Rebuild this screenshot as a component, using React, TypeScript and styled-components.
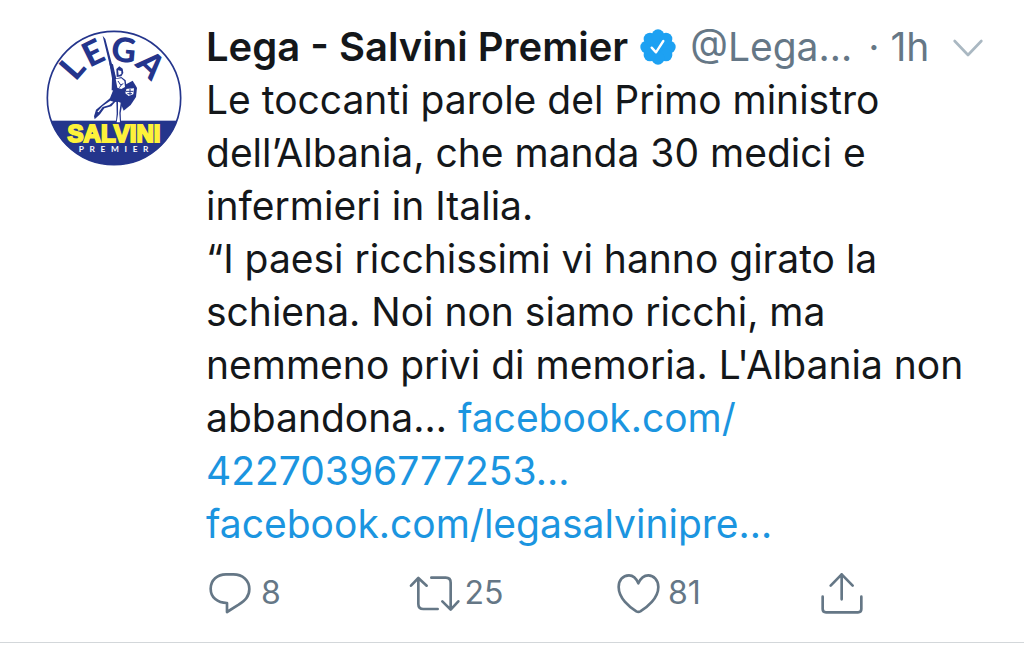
import React from "react";
import styled, { createGlobalStyle } from "styled-components";

const GlobalStyle = createGlobalStyle`
  * { box-sizing: border-box; }
  body {
    margin: 0;
    background: #ffffff;
    color: #14171a;
    font-family: Inter, "Liberation Sans", sans-serif;
  }
`;

const Tweet = styled.article`
  display: flex;
  gap: 24px;
  padding: 20px 0 28px 46px;
  border-bottom: 1px solid #d3d7da;
`;

const AvatarLink = styled.a`
  flex: none;
  width: 136px;
  height: 136px;
  margin-top: 10px;
`;

const Logo = styled.svg`
  display: block;
  width: 100%;
  height: 100%;
  overflow: visible;
`;

const Content = styled.div`
  flex: 1;
  min-width: 0;
`;

const Header = styled.header`
  display: flex;
  align-items: center;
  padding-right: 40px;
  font-size: 39px;
  line-height: 53px;
  white-space: nowrap;
`;

const Name = styled.a`
  color: inherit;
  font-size: 40px;
  font-weight: 600;
  text-decoration: none;
`;

const Badge = styled.svg`
  flex: none;
  width: 36px;
  height: 36px;
  margin: 0 14px 0 12px;
`;

const Meta = styled.span`
  color: #657786;
`;

const Time = styled.time`
  margin-left: 16px;
  color: #657786;
`;

const MenuButton = styled.button`
  display: flex;
  margin-left: auto;
  padding: 0;
  border: 0;
  background: none;
  cursor: pointer;
`;

const Chevron = styled.svg`
  width: 32px;
  height: 20px;
`;

const Text = styled.p`
  margin: 0;
  font-size: 39px;
  line-height: 53px;
  white-space: pre-line;
`;

const TextLink = styled.a`
  color: #1b95e0;
  text-decoration: none;
`;

const Actions = styled.div`
  display: grid;
  grid-template-columns: repeat(4, 1fr);
  margin-top: 22px;
  padding-right: 4px;
`;

const Action = styled.button`
  display: flex;
  align-items: center;
  gap: 5px;
  padding: 0;
  border: 0;
  background: none;
  color: #657786;
  font: inherit;
  font-size: 32px;
  line-height: 42px;
  cursor: pointer;
`;

const ActionIcon = styled.svg`
  flex: none;
  width: 50px;
  height: 42px;
  overflow: visible;
  fill: none;
  stroke: currentColor;
  stroke-width: 8;
  stroke-linecap: round;
  stroke-linejoin: round;
`;

const navy = "#24358c";
const yellow = "#fdf13a";

function LegaLogo() {
  return (
    <Logo viewBox="36 31 408 408" role="img" aria-label="Lega Salvini Premier">
      <defs>
        <clipPath id="disc">
          <circle cx="240" cy="235" r="201" />
        </clipPath>
      </defs>
      <circle cx="240" cy="235" r="201" fill="#ffffff" />
      <rect x="36" y="303" width="408" height="140" fill={navy} clipPath="url(#disc)" />
      <circle cx="240" cy="235" r="200" fill="none" stroke={navy} strokeWidth="5" />
      <g fill={navy} fontFamily="Lato, sans-serif" fontWeight="900" fontSize="102" textAnchor="middle">
        <text transform="translate(142 167) rotate(-49)">L</text>
        <text transform="translate(193 132) rotate(-26)">E</text>
        <text transform="translate(266 127) rotate(5)">G</text>
        <text transform="translate(326 161) rotate(44)">A</text>
      </g>
      {/* sword and raised arm */}
      <path d="M206 48 L214 58 L232 126 L242 162 L250 184 L240 180 L228 140 L214 82 Z" fill={navy} />
      <path d="M226 130 L237 134 L244 166 L246 214 L233 212 L234 176 Z" fill={navy} />
      {/* helmet and face */}
      <path d="M247 148 L256 140 L266 147 L268 160 L262 170 L248 172 Z" fill={navy} />
      <path d="M252 152 L262 154 L262 163 L254 167 Z" fill="#ffffff" />
      {/* shield */}
      <path d="M272 196 L296 183 L309 204 L306 232 L290 256 L269 273 L258 246 Z" fill={navy} />
      <path d="M274 208 L300 206 L298 224 L284 229 L273 220 Z" fill="#ffffff" />
      <path d="M276 215 H298 M280 222 H294 M288 208 V227" stroke={navy} strokeWidth="3" />
      {/* torso and skirt */}
      <path d="M241 178 L262 172 L275 182 L278 206 L266 248 L240 246 L226 240 L238 210 Z" fill={navy} />
      <path d="M245 178 L262 176 L271 184 L273 202 L262 208 L250 204 Z" fill="#ffffff" />
      <path d="M252 184 L260 196 L268 192 M256 204 L262 196" stroke={navy} strokeWidth="3" fill="none" />
      {/* legs */}
      <path d="M228 236 L246 244 L232 260 L211 266 L198 284 L182 299 L180 290 L186 270 L206 254 Z" fill={navy} />
      <path d="M229 243 L238 246 L226 256 L206 262 L194 278 L190 276 L206 259 Z" fill="#ffffff" />
      <path d="M247 240 L266 246 L260 280 L261 304 L246 304 L248 282 Z" fill={navy} />
      <path d="M252 246 L260 249 L256 280 L258 308 L248 308 L252 284 Z" fill="#ffffff" />
      <text
        x="240"
        y="368"
        fill={yellow}
        stroke={yellow}
        strokeWidth="6"
        fontFamily="'Liberation Sans', sans-serif"
        fontWeight="700"
        fontSize="72"
        textAnchor="middle"
      >
        SALVINI
      </text>
      <text x="134" y="397" fill="#ffffff" fontFamily="Lato, sans-serif" fontWeight="700" fontSize="25" letterSpacing="17">
        PREMIER
      </text>
    </Logo>
  );
}

function VerifiedBadge() {
  const lobes = Array.from({ length: 8 }, (_, i) => (i * Math.PI) / 4);
  return (
    <Badge viewBox="0 0 108 108" role="img" aria-label="Account verificato">
      <g fill="#1da1f2">
        <circle cx="54" cy="54" r="42" />
        {lobes.map((a) => (
          <circle key={a} cx={54 + 34 * Math.cos(a)} cy={54 + 34 * Math.sin(a)} r="19" />
        ))}
      </g>
      <path d="M35 56 L48 70 L70 36" fill="none" stroke="#ffffff" strokeWidth="7" strokeLinecap="round" strokeLinejoin="round" />
    </Badge>
  );
}

const actions = [
  {
    label: "Rispondi",
    count: "8",
    viewBox: "30 36 150 126",
    d: "M93 129 C64 129 44 112 44 86 C44 60 64 43 90 43 H112 C140 43 160 61 160 87 C160 110 147 121 128 134 L93 156 Z",
  },
  {
    label: "Ritwitta",
    count: "25",
    viewBox: "641 36 150 126",
    d: "M644 77 L666 54 L691 77 M666 54 V132 Q666 147 681 147 H724 M705 53 H748 Q763 53 763 68 V147 M738 124 L763 149 L786 124",
  },
  {
    label: "Mi piace",
    count: "81",
    viewBox: "38 36 150 126",
    d: "M114 70 C107 53 98 46 86 46 C67 46 55 61 55 81 C55 115 88 142 108 154 Q114 157 120 154 C140 142 174 115 174 81 C174 60 160 46 144 46 C130 46 121 54 114 70 Z",
  },
  {
    label: "Condividi",
    count: "",
    viewBox: "652 36 150 126",
    d: "M726 118 V43 M693 77 L726 43 L759 77 M669 110 V147 Q669 157 679 157 H775 Q785 157 785 147 V110",
  },
];

export default function App() {
  return (
    <>
      <GlobalStyle />
      <Tweet>
        <AvatarLink href="#profile">
          <LegaLogo />
        </AvatarLink>
        <Content>
          <Header>
            <Name href="#profile">Lega - Salvini Premier</Name>
            <VerifiedBadge />
            <Meta>@Lega…</Meta>
            <Time>· 1h</Time>
            <MenuButton type="button" aria-label="Altro">
              <Chevron viewBox="0 0 96 60" fill="none" stroke="#aab8c2" strokeWidth="8" strokeLinecap="round" strokeLinejoin="round">
                <path d="M8 12 L48 54 L88 12" />
              </Chevron>
            </MenuButton>
          </Header>
          <Text>
            {"Le toccanti parole del Primo ministro\ndell’Albania, che manda 30 medici e\ninfermieri in Italia.\n“I paesi ricchissimi vi hanno girato la\nschiena. Noi non siamo ricchi, ma\nnemmeno privi di memoria. L'Albania non\nabbandona… "}
            <TextLink href="#post">{"facebook.com/\n42270396777253…"}</TextLink>
            {"\n"}
            <TextLink href="#page">facebook.com/legasalvinipre…</TextLink>
          </Text>
          <Actions>
            {actions.map((a) => (
              <Action key={a.label} type="button" aria-label={`${a.label} ${a.count}`.trim()}>
                <ActionIcon viewBox={a.viewBox}>
                  <path d={a.d} />
                </ActionIcon>
                {a.count && <span>{a.count}</span>}
              </Action>
            ))}
          </Actions>
        </Content>
      </Tweet>
    </>
  );
}
